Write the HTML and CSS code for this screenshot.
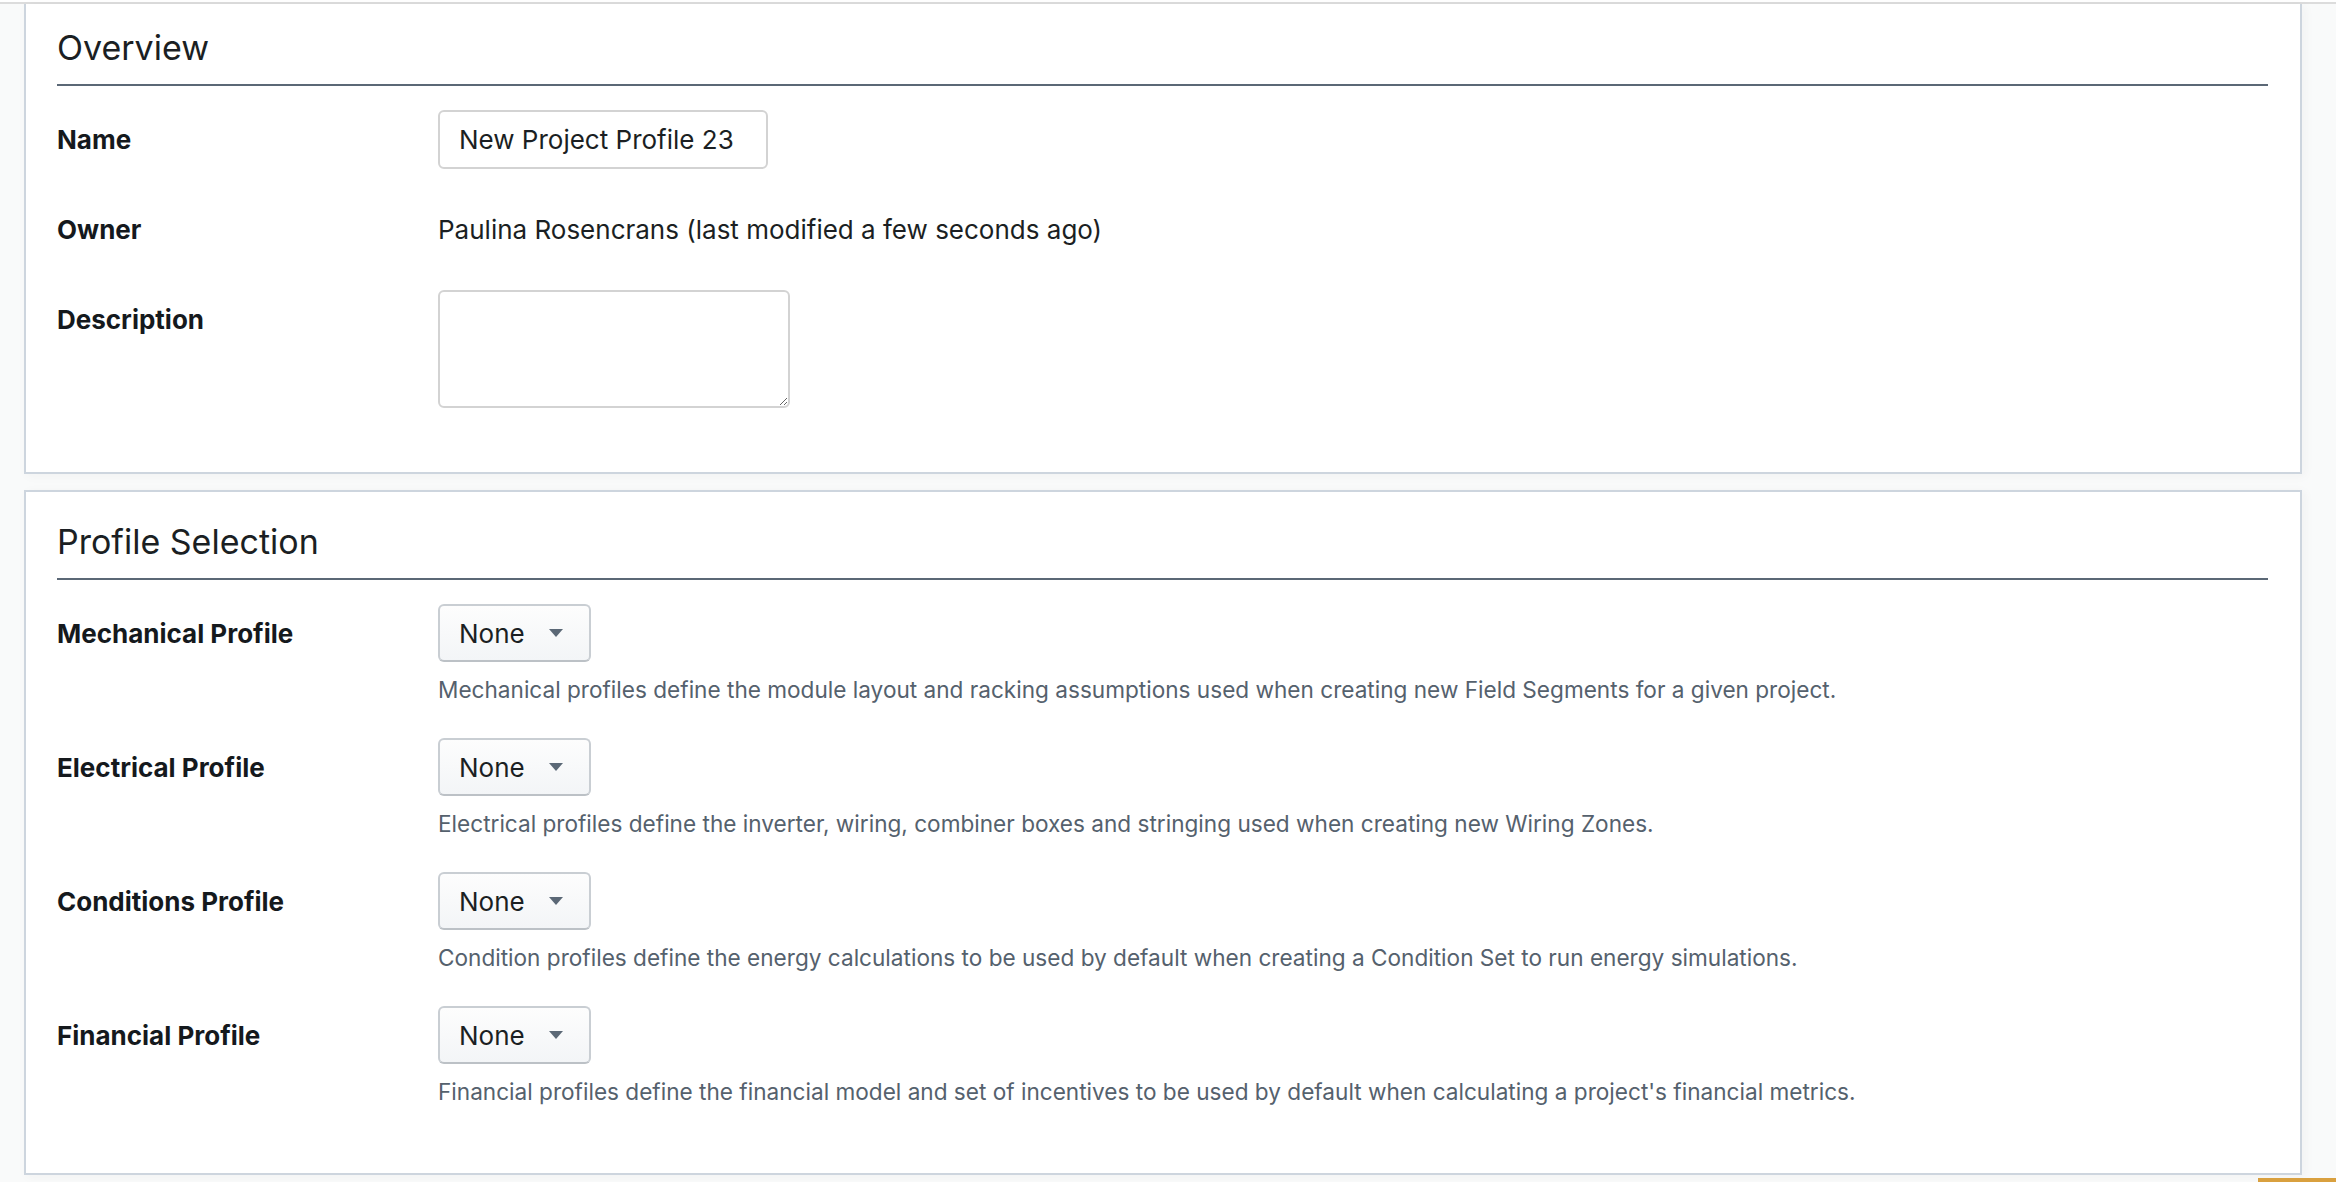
FILE: index.html
```html
<!DOCTYPE html>
<html lang="en">
<head>
    <meta charset="UTF-8">
    <meta name="viewport" content="width=device-width, initial-scale=1.0">
    <title>Project Profile</title>
    <link rel="stylesheet" href="styles.css">
</head>
<body>
    <header class="app-bar"></header>

    <main class="page">
        <section class="panel panel-continued">
            <h2 class="panel-title">Overview</h2>
            <div class="field-list">
                <div class="field">
                    <label class="field-label" for="profileName">Name</label>
                    <div class="field-control">
                        <input id="profileName" class="text-input" type="text" value="New Project Profile 23">
                    </div>
                </div>
                <div class="field">
                    <span class="field-label">Owner</span>
                    <div class="field-control">
                        <span class="field-value">Paulina Rosencrans (last modified a few seconds ago)</span>
                    </div>
                </div>
                <div class="field">
                    <label class="field-label" for="profileDescription">Description</label>
                    <div class="field-control">
                        <textarea id="profileDescription" class="text-area"></textarea>
                    </div>
                </div>
            </div>
        </section>

        <section class="panel">
            <h2 class="panel-title">Profile Selection</h2>
            <div class="field-list">
                <div class="field">
                    <span class="field-label">Mechanical Profile</span>
                    <div class="field-control">
                        <button class="dropdown" type="button">None <span class="caret"></span></button>
                        <p class="help-text">Mechanical profiles define the module layout and racking assumptions used when creating new Field Segments for a given project.</p>
                    </div>
                </div>
                <div class="field">
                    <span class="field-label">Electrical Profile</span>
                    <div class="field-control">
                        <button class="dropdown" type="button">None <span class="caret"></span></button>
                        <p class="help-text">Electrical profiles define the inverter, wiring, combiner boxes and stringing used when creating new Wiring Zones.</p>
                    </div>
                </div>
                <div class="field">
                    <span class="field-label">Conditions Profile</span>
                    <div class="field-control">
                        <button class="dropdown" type="button">None <span class="caret"></span></button>
                        <p class="help-text">Condition profiles define the energy calculations to be used by default when creating a Condition Set to run energy simulations.</p>
                    </div>
                </div>
                <div class="field">
                    <span class="field-label">Financial Profile</span>
                    <div class="field-control">
                        <button class="dropdown" type="button">None <span class="caret"></span></button>
                        <p class="help-text">Financial profiles define the financial model and set of incentives to be used by default when calculating a project's financial metrics.</p>
                    </div>
                </div>
            </div>
        </section>
    </main>

    <div class="launcher"></div>
</body>
</html>
```

FILE: styles.css
```css
html, body {
    margin: 0;
    height: 100%;
    overflow: hidden;
}
body {
    background-color: #f9fafa;
    font-family: Inter, "Liberation Sans", sans-serif;
    font-size: 26px;
    color: #1b1f23;
}
.app-bar {
    height: 2px;
    background-color: #fff;
    border-bottom: 2px solid #dcdcdc;
}
.page {
    display: flex;
    flex-direction: column;
    gap: 16px;
    padding: 0 34px 0 24px;
}
.panel {
    background-color: #fff;
    border: 2px solid #cdd5de;
    box-shadow: 3px 2px 10px rgba(40, 50, 60, 0.04);
    padding: 0 32px 64px 31px;
}
/* first panel is scrolled, its top edge sits under the bar */
.panel-continued {
    border-top: none;
}
.panel-title {
    margin: 0;
    padding: 28px 0 14px;
    font-size: 34px;
    font-weight: 400;
    line-height: 44px;
    border-bottom: 2px solid #5b6876;
}
.panel-continued .panel-title {
    padding-top: 22px;
}
.field-list {
    display: flex;
    flex-direction: column;
    gap: 31px;
    padding-top: 24px;
}
.field {
    display: grid;
    grid-template-columns: 381px 1fr;
    align-items: start;
}
.field-label {
    font-weight: 700;
    line-height: 59px;
    color: #15191d;
}
.field-value {
    display: block;
    line-height: 59px;
}
.text-input {
    box-sizing: border-box;
    width: 330px;
    height: 59px;
    padding: 0 19px;
    border: 2px solid #d3d3d3;
    border-radius: 6px;
    font: inherit;
    color: inherit;
}
.text-area {
    display: block;
    box-sizing: border-box;
    width: 352px;
    height: 118px;
    border: 2px solid #d3d3d3;
    border-radius: 6px;
    font: inherit;
}
.dropdown {
    display: inline-flex;
    align-items: center;
    gap: 24px;
    height: 58px;
    padding: 0 26px 0 19px;
    border: 2px solid #c9ced3;
    border-bottom-color: #bcc1c6;
    border-radius: 6px;
    background: linear-gradient(#fdfdfd, #f3f5f7);
    font: inherit;
    color: inherit;
}
.caret {
    width: 0;
    height: 0;
    border-left: 7px solid transparent;
    border-right: 7px solid transparent;
    border-top: 8px solid #5b6876;
}
.help-text {
    margin: 10px 0 0;
    font-size: 22.6px;
    line-height: 35px;
    color: #55616d;
}
.launcher {
    position: fixed;
    right: 0;
    bottom: 0;
    width: 78px;
    height: 4px;
    background-color: #d9a03f;
}
```
